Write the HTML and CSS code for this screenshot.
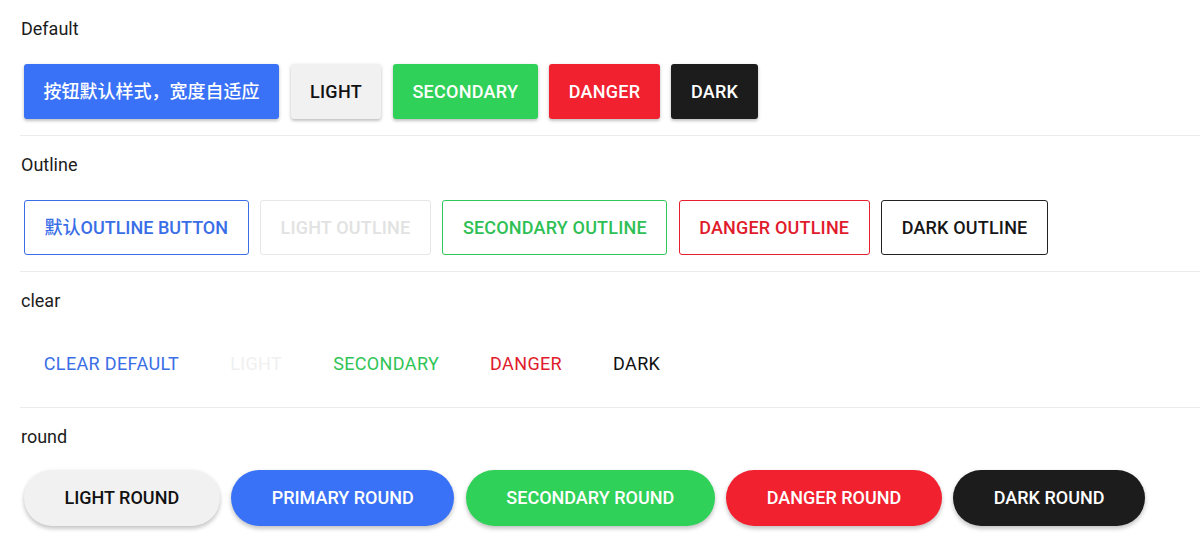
FILE: index.html
```html
<!DOCTYPE html>
<html lang="zh">
<head>
<meta charset="utf-8">
<title>Buttons</title>
<link rel="stylesheet" href="styles.css">
</head>
<body>
<div class="page">
  <section class="group">
    <div class="label">Default</div>
    <div class="row">
      <button class="btn solid primary cjk">按钮默认样式，宽度自适应</button>
      <button class="btn solid light">LIGHT</button>
      <button class="btn solid secondary">SECONDARY</button>
      <button class="btn solid danger">DANGER</button>
      <button class="btn solid dark">DARK</button>
    </div>
  </section>
  <section class="group">
    <div class="label">Outline</div>
    <div class="row">
      <button class="btn outline primary cjk">默认OUTLINE BUTTON</button>
      <button class="btn outline light">LIGHT OUTLINE</button>
      <button class="btn outline secondary">SECONDARY OUTLINE</button>
      <button class="btn outline danger">DANGER OUTLINE</button>
      <button class="btn outline dark">DARK OUTLINE</button>
    </div>
  </section>
  <section class="group">
    <div class="label">clear</div>
    <div class="row">
      <button class="btn clear primary">CLEAR DEFAULT</button>
      <button class="btn clear light">LIGHT</button>
      <button class="btn clear secondary">SECONDARY</button>
      <button class="btn clear danger">DANGER</button>
      <button class="btn clear dark">DARK</button>
    </div>
  </section>
  <section class="group last">
    <div class="label">round</div>
    <div class="row round-row">
      <button class="btn solid round light">LIGHT ROUND</button>
      <button class="btn solid round primary">PRIMARY ROUND</button>
      <button class="btn solid round secondary">SECONDARY ROUND</button>
      <button class="btn solid round danger">DANGER ROUND</button>
      <button class="btn solid round dark">DARK ROUND</button>
    </div>
  </section>
</div>
</body>
</html>
```
FILE: styles.css
```css
html, body {
  margin: 0;
  padding: 0;
  background: #ffffff;
}
body {
  font-family: Roboto, "Noto Sans CJK SC", sans-serif;
  color: #1a1a1a;
}
.page {
  padding-left: 20px;
}
.group {
  padding-top: 17px;
  padding-bottom: 16px;
  border-bottom: 1px solid #ececec;
}
.group.last {
  border-bottom: none;
}
.label {
  font-size: 18px;
  line-height: 24px;
  padding-left: 1px;
  color: #1c1c1c;
}
.row {
  display: flex;
  gap: 11.5px;
  margin-top: 23px;
  padding-left: 4px;
}
.round-row {
  margin-top: 21px;
}
.btn {
  font-family: Roboto, "Noto Sans CJK SC", sans-serif;
  font-size: 18px;
  font-weight: 500;
  line-height: 20px;
  height: 55px;
  padding: 0 18.5px;
  border: 1px solid transparent;
  border-radius: 3px;
  background: transparent;
  display: flex;
  align-items: center;
  justify-content: center;
  white-space: nowrap;
  letter-spacing: 0.015em;
  cursor: pointer;
}
.btn.cjk {
  letter-spacing: 0;
}
.btn.solid {
  box-shadow: 0 2px 3px rgba(0,0,0,0.18), 0 1px 4px rgba(0,0,0,0.10);
  color: #ffffff;
}
.btn.solid.primary { background: #3a72f7; }
.btn.solid.light { background: #f1f1f1; color: #111111; }
.btn.solid.secondary { background: #30d158; }
.btn.solid.danger { background: #f1212f; }
.btn.solid.dark { background: #1c1c1c; }

.btn.outline {
  background: #ffffff;
  padding: 0 19.5px;
  letter-spacing: 0.01em;
}
.btn.outline.cjk { letter-spacing: 0; }
.btn.outline.primary { border-color: #3a6ee6; color: #3a6ee6; }
.btn.outline.light { border-color: #e6e6e6; color: #e2e2e2; }
.btn.outline.secondary { border-color: #30c75a; color: #2fbf55; }
.btn.outline.danger { border-color: #e51f2e; color: #e01b2c; }
.btn.outline.dark { border-color: #222222; color: #161616; }

.btn.clear {
  font-weight: 400;
  padding: 0 18.75px;
  letter-spacing: 0.02em;
}
.btn.clear.primary { color: #3a6ee6; }
.btn.clear.light { color: #f0f0f0; }
.btn.clear.secondary { color: #2fc456; }
.btn.clear.danger { color: #e01b2c; }
.btn.clear.dark { color: #111111; }

.btn.round {
  border-radius: 28px;
  height: 56px;
  padding: 0 39.5px;
  letter-spacing: 0;
  box-shadow: 0 3px 4px rgba(0,0,0,0.18), 0 1px 5px rgba(0,0,0,0.08);
}
```
